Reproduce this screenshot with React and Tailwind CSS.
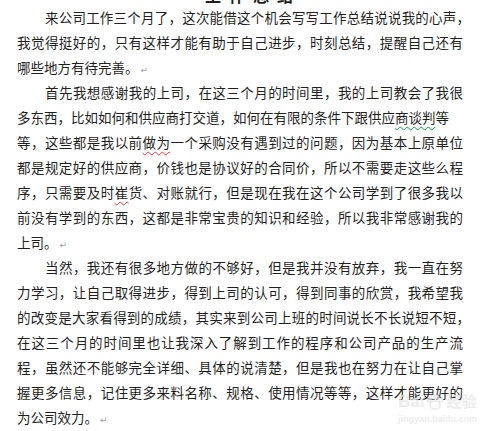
import React from 'react';

const W = 'w-[446px]';

const Mark = () => (
    <span className="ml-[2px] text-[9px] text-gray-400 align-baseline" style={{ fontFamily: 'DejaVu Sans' }}>↵</span>
);

const Wavy = ({ color = 'red', children }) => (
    <span className={color === 'red' ? 'underline decoration-wavy decoration-red-500 decoration-1 underline-offset-[3px]' : 'underline decoration-wavy decoration-green-600 decoration-1 underline-offset-[3px]'}>
        {children}
    </span>
);

const Line = ({ children, first = false, last = false, width = W }) => (
    <div className={`${last ? '' : `${width} [text-align-last:justify] text-justify`} ${first ? 'indent-[28px]' : ''} h-[25px] leading-[25px] whitespace-nowrap`}>
        {children}
    </div>
);

export default function App() {
    return (
        <div className="relative w-[500px] h-[431px] overflow-hidden bg-white text-[13.5px] text-[#1f1f1f]"
            style={{ fontFamily: '"Noto Sans CJK SC", "Noto Sans", sans-serif' }}>
            {/* clipped heading from the part above */}
            <div className="h-[5px] overflow-hidden flex justify-center">
                <div className="-mt-[15px] pl-[6px] text-[16px] font-bold tracking-[8px] leading-[20px]">工作总结</div>
            </div>

            <div className="pl-[17px]">
                <Line first width="w-[453px]">来公司工作三个月了，这次能借这个机会写写工作总结说说我的心声，</Line>
                <Line>我觉得挺好的，只有这样才能有助于自己进步，时刻总结，提醒自己还有</Line>
                <Line last>哪些地方有待完善。<Mark /></Line>

                <Line first>首先我想感谢我的上司，在这三个月的时间里，我的上司教会了我很</Line>
                <Line width="w-[432px]">多东西，比如如何和供应商打交道，如何在有限的条件下跟供应<Wavy color="green">商谈判</Wavy>等</Line>
                <Line>等，这些都是我以前<Wavy>做为</Wavy>一个采购没有遇到过的问题，因为基本上原单位</Line>
                <Line>都是规定好的供应商，价钱也是协议好的合同价，所以不需要走这些么程</Line>
                <Line>序，只需要及时<Wavy>崔</Wavy>货、对账就行，但是现在我在这个公司学到了很多我以</Line>
                <Line>前没有学到的东西，这都是非常宝贵的知识和经验，所以我非常感谢我的</Line>
                <Line last>上司。<Mark /></Line>

                <Line first>当然，我还有很多地方做的不够好，但是我并没有放弃，我一直在努</Line>
                <Line>力学习，让自己取得进步，得到上司的认可，得到同事的欣赏，我希望我</Line>
                <Line width="w-[453px]">的改变是大家看得到的成绩，其实来到公司上班的时间说长不长说短不短，</Line>
                <Line>在这三个月的时间里也让我深入了解到工作的程序和公司产品的生产流</Line>
                <Line>程，虽然还不能够完全详细、具体的说清楚，但是我也在努力在让自己掌</Line>
                <Line>握更多信息，记住更多来料名称、规格、使用情况等等，这样才能更好的</Line>
                <Line last>为公司效力。<Mark /></Line>
            </div>

            {/* baidu jingyan watermark */}
            <div className="absolute left-[398px] top-[392px] flex flex-col items-start opacity-70">
                <div className="flex items-center gap-[2px] text-[17px] font-bold leading-[20px] text-[#e4e4e4]"
                    style={{ fontFamily: '"Liberation Sans", "Noto Sans CJK SC", sans-serif' }}>
                    <span>Bai</span>
                    <svg width="18" height="16" viewBox="0 0 18 16" fill="none" stroke="#e0e0e0" strokeWidth="1.6">
                        <ellipse cx="9" cy="11" rx="5" ry="4" />
                        <circle cx="3" cy="6" r="1.8" />
                        <circle cx="7" cy="3" r="1.8" />
                        <circle cx="11" cy="3" r="1.8" />
                        <circle cx="15" cy="6" r="1.8" />
                    </svg>
                    <span className="text-[15px]">经验</span>
                </div>
                <div className="mt-[2px] text-[9px] leading-[10px] font-bold text-[#e6e6e6]"
                    style={{ fontFamily: '"Liberation Sans", sans-serif' }}>jingyan.baidu.com</div>
            </div>
        </div>
    );
}
